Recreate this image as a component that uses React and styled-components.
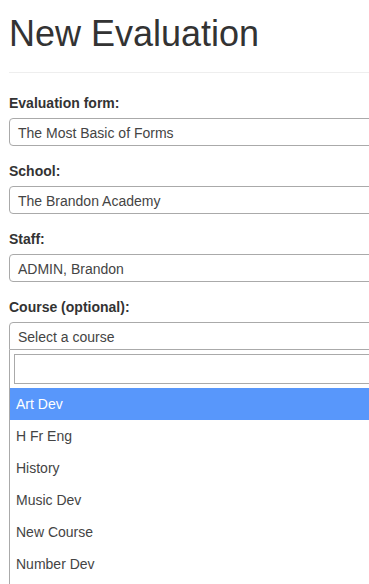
import styled, { createGlobalStyle } from "styled-components";

const GlobalStyle = createGlobalStyle`
  html, body {
    margin: 0;
    padding: 0;
    overflow: hidden;
    background: #fff;
  }

  body {
    font-family: "Liberation Sans", Arial, sans-serif;
    color: #333;
  }
`;

const Page = styled.div`
  width: 440px;
  padding: 14px 0 0 9px;
`;

const Title = styled.h1`
  margin: 0;
  font-size: 36px;
  font-weight: normal;
  line-height: 40px;
  color: #333;
`;

const Divider = styled.hr`
  margin: 18px 0 21px;
  border: 0;
  border-top: 1px solid #eee;
`;

const Field = styled.div`
  display: flex;
  flex-direction: column;
  gap: 6px;
  margin-bottom: 16px;
`;

const Label = styled.label`
  font-size: 14px;
  font-weight: bold;
  line-height: 18px;
  color: #333;
`;

const Combo = styled.div`
  display: flex;
  flex-direction: column;
`;

const Selection = styled.div`
  box-sizing: border-box;
  height: 28px;
  border: 1px solid #aaa;
  border-radius: ${(p) => (p.$open ? "4px 4px 0 0" : "4px")};
  padding-left: 8px;
  font-size: 14px;
  line-height: 28px;
  color: #444;
  background: #fff;
`;

const Dropdown = styled.div`
  border: 1px solid #aaa;
  border-top: 0;
  background: #fff;
`;

const SearchWrap = styled.div`
  padding: 4px;
`;

const SearchField = styled.input`
  box-sizing: border-box;
  display: block;
  width: 100%;
  height: 30px;
  border: 1px solid #aaa;
  padding: 4px;
  font: inherit;
  outline: none;
`;

const Results = styled.ul`
  list-style: none;
  margin: 0;
  padding: 0 0 20px;
`;

const Option = styled.li`
  padding: 6px;
  font-size: 14px;
  line-height: 20px;
  color: ${(p) => (p.$active ? "#fff" : "#444")};
  background: ${(p) => (p.$active ? "#5897fb" : "#fff")};
`;

const fields = [
  { label: "Evaluation form:", value: "The Most Basic of Forms" },
  { label: "School:", value: "The Brandon Academy" },
  { label: "Staff:", value: "ADMIN, Brandon" },
];

const courses = [
  "Art Dev",
  "H Fr Eng",
  "History",
  "Music Dev",
  "New Course",
  "Number Dev",
];

export default function App() {
  return (
    <Page>
      <GlobalStyle />
      <Title>New Evaluation</Title>
      <Divider />
      {fields.map((f) => (
        <Field key={f.label}>
          <Label>{f.label}</Label>
          <Selection>{f.value}</Selection>
        </Field>
      ))}
      <Field>
        <Label>Course (optional):</Label>
        <Combo>
          <Selection $open>Select a course</Selection>
          <Dropdown>
            <SearchWrap>
              <SearchField type="search" />
            </SearchWrap>
            <Results>
              {courses.map((c, i) => (
                <Option key={c} $active={i === 0}>
                  {c}
                </Option>
              ))}
            </Results>
          </Dropdown>
        </Combo>
      </Field>
    </Page>
  );
}
